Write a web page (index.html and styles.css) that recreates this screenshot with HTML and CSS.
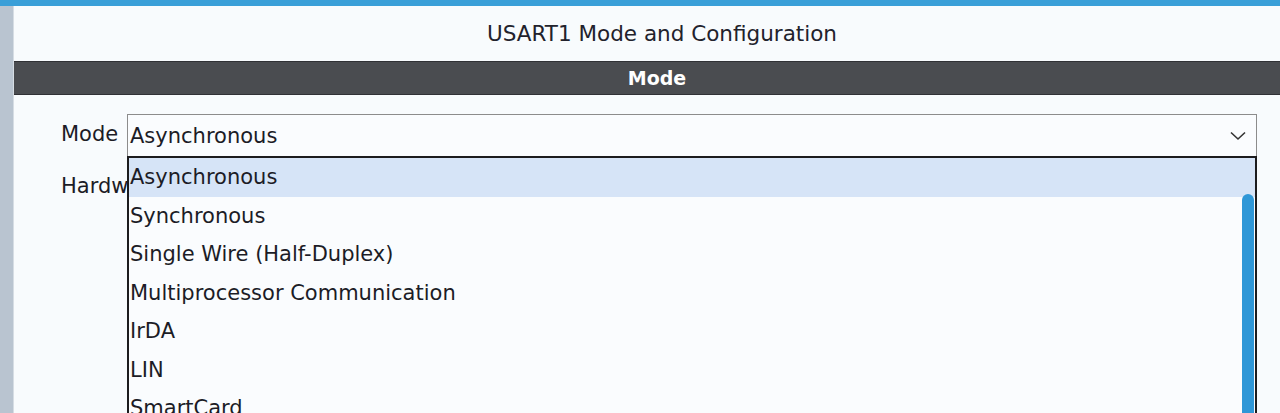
FILE: index.html
```html
<!DOCTYPE html>
<html>
<head>
<meta charset="utf-8">
<link rel="stylesheet" href="styles.css">
</head>
<body>
<div class="topbar"></div>
<div class="main">
  <div class="side"></div>
  <div class="panel">
    <div class="title">USART1 Mode and Configuration</div>
    <div class="section">Mode</div>
    <div class="form">
      <div class="row">
        <div class="label">Mode</div>
        <div class="select">
          <span class="value">Asynchronous</span>
          <svg class="chev" width="16" height="10" viewBox="0 0 16 10"><polyline points="1,1.5 8,8 15,1.5" fill="none" stroke="#333" stroke-width="1.6"/></svg>
          <div class="dropdown">
            <div class="item sel">Asynchronous</div>
            <div class="item">Synchronous</div>
            <div class="item">Single Wire (Half-Duplex)</div>
            <div class="item">Multiprocessor Communication</div>
            <div class="item">IrDA</div>
            <div class="item">LIN</div>
            <div class="item">SmartCard</div>
            <div class="thumb"></div>
          </div>
        </div>
      </div>
      <div class="row2">
        <div class="label">Hardware Flow Control (RS232)</div>
      </div>
    </div>
  </div>
</div>
</body>
</html>
```
FILE: styles.css
```css
html, body {
  margin: 0;
  padding: 0;
  height: 100%;
  overflow: hidden;
}
body {
  background: #f8fbfd;
  font-family: "DejaVu Sans", sans-serif;
  color: #1c1c26;
}
.topbar {
  height: 6px;
  background: #3a9fd8;
}
.main {
  display: flex;
  height: 407px;
}
.side {
  width: 13px;
  background: #b9c4d0;
  flex: none;
}
.panel {
  flex: 1;
  border-left: 1px solid #d6dde4;
}
.title {
  height: 55px;
  display: flex;
  align-items: center;
  justify-content: center;
  font-size: 21.5px;
  padding-left: 30px;
  color: #22222c;
}
.section {
  height: 32px;
  background: #4a4c50;
  border-top: 1px solid #303135;
  border-bottom: 1px solid #303135;
  color: #fff;
  font-weight: bold;
  font-size: 19px;
  display: flex;
  align-items: center;
  justify-content: center;
  padding-left: 20px;
}
.form {
  padding: 19px 23px 0 47px;
}
.row {
  display: flex;
  height: 43px;
}
.label {
  width: 66px;
  flex: none;
  font-size: 21px;
  line-height: 41px;
  white-space: nowrap;
}
.select {
  flex: 1;
  position: relative;
  border: 1px solid #8c8c8c;
  border-bottom: none;
  background: #fafcfe;
  display: flex;
  align-items: center;
}
.value {
  font-size: 21px;
  padding-left: 2px;
  flex: 1;
}
.chev {
  margin-right: 10px;
}
.dropdown {
  position: absolute;
  top: 41px;
  left: -1px;
  right: -1px;
  height: 300px;
  border: 2px solid #1c1c1e;
  border-bottom: none;
  background: #fafcfe;
  z-index: 2;
}
.item {
  height: 38.5px;
  line-height: 39px;
  font-size: 21px;
  padding-left: 1px;
  white-space: nowrap;
}
.item.sel {
  background: #d6e4f7;
}
.thumb {
  position: absolute;
  right: 1px;
  top: 36px;
  width: 12px;
  height: 260px;
  background: #2f97d7;
  border-radius: 6px 6px 0 0;
}
.row2 {
  padding-top: 9px;
}
.row2 .label {
  width: auto;
}
```
